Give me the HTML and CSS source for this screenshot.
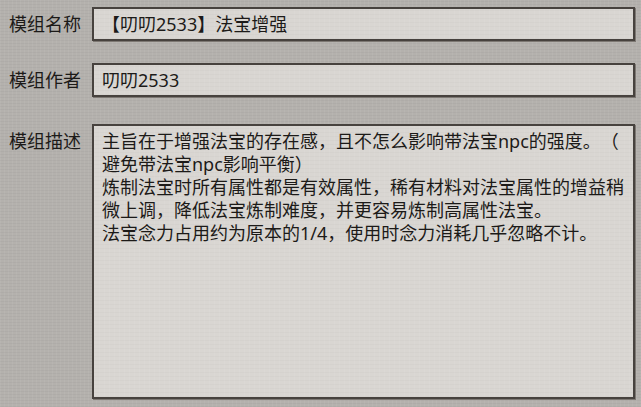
FILE: index.html
```html
<!DOCTYPE html>
<html lang="zh">
<head>
<meta charset="utf-8">
<link rel="stylesheet" href="styles.css">
</head>
<body>
<div class="form">
  <div class="row row-name">
    <div class="label">模组名称</div>
    <div class="field single">【叨叨2533】法宝增强</div>
  </div>
  <div class="row row-author">
    <div class="label">模组作者</div>
    <div class="field single">叨叨2533</div>
  </div>
  <div class="row row-desc">
    <div class="label label-top">模组描述</div>
    <div class="field multi">主旨在于增强法宝的存在感，且不怎么影响带法宝npc的强度。（避免带法宝npc影响平衡）<br>炼制法宝时所有属性都是有效属性，稀有材料对法宝属性的增益稍微上调，降低法宝炼制难度，并更容易炼制高属性法宝。<br>法宝念力占用约为原本的1/4，使用时念力消耗几乎忽略不计。</div>
  </div>
</div>
</body>
</html>
```

FILE: styles.css
```css
html, body {
  margin: 0;
  padding: 0;
}
body {
  width: 641px;
  height: 407px;
  overflow: hidden;
  background-color: #b4b1ad;
  background-image:
    repeating-linear-gradient(90deg, rgba(255,255,255,0.05) 0 1px, rgba(0,0,0,0) 1px 4px),
    repeating-linear-gradient(0deg, rgba(0,0,0,0.03) 0 1px, rgba(0,0,0,0) 1px 3px);
  font-family: "Noto Sans", "Noto Sans CJK SC", sans-serif;
  color: #1c1a18;
  font-size: 18px;
  text-spacing-trim: space-all;
}
.form {
  display: flex;
  flex-direction: column;
  padding: 7px 6px 0 9px;
}
.row {
  display: flex;
  align-items: center;
}
.row-author {
  margin-top: 22px;
}
.row-desc {
  margin-top: 27px;
  align-items: flex-start;
}
.label {
  width: 83px;
  flex: none;
  line-height: 24px;
}
.label-top {
  padding-top: 6px;
  line-height: 23px;
}
.field {
  flex: 1;
  box-sizing: border-box;
  border: 2px solid #47423e;
  box-shadow: 1px 1px 0 #7d7873;
  background-color: #d9d6d2;
  background-image:
    repeating-linear-gradient(90deg, rgba(255,255,255,0.06) 0 1px, rgba(0,0,0,0) 1px 5px),
    repeating-linear-gradient(0deg, rgba(0,0,0,0.02) 0 1px, rgba(0,0,0,0) 1px 4px);
}
.single {
  height: 34px;
  line-height: 30px;
  padding: 0 8px;
  white-space: nowrap;
}
.multi {
  height: 275px;
  line-height: 23px;
  padding: 4px 8px 0 8px;
  line-break: anywhere;
}
```
